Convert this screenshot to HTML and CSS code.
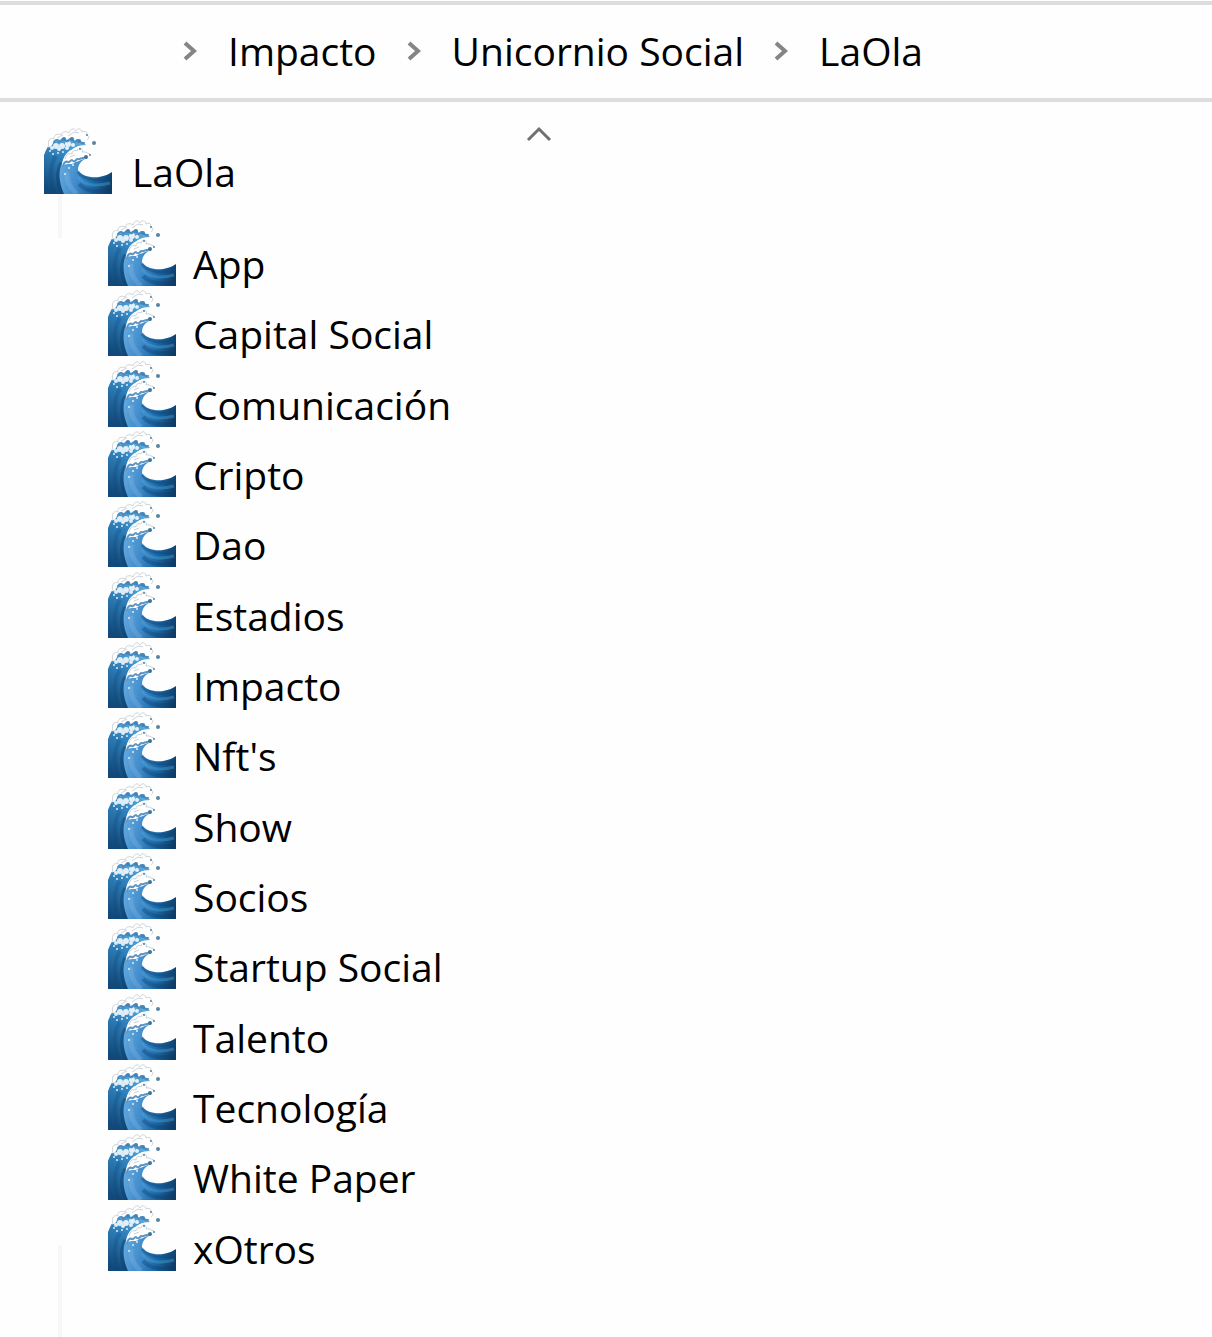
FILE: index.html
```html
<!DOCTYPE html>
<html lang="es">
<head>
  <meta charset="UTF-8" />
  <meta name="viewport" content="width=device-width, initial-scale=1.0"/>
  <title>LaOla</title>
  <link rel="stylesheet" href="styles.css">
</head>
<body>

<!-- Wave icon, reused by every folder -->
<svg class="sprite" aria-hidden="true">
  <defs>
    <linearGradient id="back" x1="0.7" y1="0" x2="0.3" y2="1">
      <stop offset="0" stop-color="#5fb0de"/>
      <stop offset="0.4" stop-color="#2f80bb"/>
      <stop offset="1" stop-color="#12497a"/>
    </linearGradient>
    <linearGradient id="front" x1="0" y1="0.5" x2="1" y2="0.7">
      <stop offset="0" stop-color="#5fa6dc"/>
      <stop offset="0.35" stop-color="#3f8aca"/>
      <stop offset="0.65" stop-color="#1d68a6"/>
      <stop offset="1" stop-color="#0f3c66"/>
    </linearGradient>
    <symbol id="wave" viewBox="0 0 68 68">
      <path fill="url(#back)" d="M0 68V29C2 24 4 19 8 16C14 10 24 10 31 12C36 13 40 16 42 19C34 19 28 22 25 27L23 40L26 68Z"/>
      <path fill="none" stroke="#0b4375" stroke-width="4" opacity=".25" d="M12 30C5 40 6 56 11 68"/>
      <path fill="none" stroke="#0b3d6b" stroke-width="5" opacity=".45" d="M18 37C13 47 14 58 19 68"/>
      <path fill="url(#front)" d="M20 68C15 57 14 45 18 37C22 31 31 30 43 32C38 34 34 38 34 44C37 50 47 52 55 51C61 50 65 48 68 46V68Z"/>
      <path fill="none" stroke="#0c4a7d" stroke-width="3" opacity=".45" d="M34 46C39 53 53 57 68 51"/>
      <path fill="none" stroke="#4aa9dc" stroke-width="3" opacity=".4" d="M34 51C39 59 52 61 66 57"/>
      <path fill="none" stroke="#0c3c68" stroke-width="4" opacity=".35" d="M35 58C41 65 53 67 68 64"/>
      <path fill="none" stroke="#8bbbe5" stroke-width="5" opacity=".3" d="M23 46C22 54 26 62 33 68"/>
      <!-- foam on the crest -->
      <path fill="#fff" d="M4 21C2 15 6 10 11 12C12 6 17 5 21 6C27 1 35 1 39 6C43 5 46 9 43 11C46 14 44 17 41 18C38 17 36 14 33 14C30 16 28 12 25 13C22 15 20 12 17 14C14 16 12 14 9 17C8 20 6 22 4 21Z"/>
      <g fill="#fff" opacity=".85">
        <circle cx="12" cy="20" r="3"/>
        <circle cx="18" cy="20" r="3"/>
        <circle cx="24" cy="18" r="3"/>
        <circle cx="29" cy="19" r="2"/>
        <circle cx="15" cy="23" r="2"/>
        <circle cx="8" cy="22" r="2"/>
        <circle cx="23" cy="22" r="2"/>
      </g>
      <path fill="none" stroke="#cdd3d8" stroke-width="1" stroke-linejoin="round" d="M5 21C3 15 6 11 10 13C9 9 14 7 17 9C18 5 23 5 25 7C26 2 31 2 32 5C34 1 38 3 38 6C42 4 44 7 42 9C46 9 45 13 43 14M13 12L19 9M24 10L30 6L35 7"/>
      <path fill="none" stroke="#4c8cbf" stroke-width="2" stroke-linecap="round" stroke-linejoin="round" d="M10 16C12 13 14 14 15 15C17 16 18 12 20 13C22 14 22 16 24 15C26 12 28 12 29 14C30 17 32 16 33 14C36 14 36 18 40 17"/>
      <g fill="#4484b8">
        <circle cx="20" cy="13" r="2"/>
        <circle cx="28" cy="13" r="2"/>
        <circle cx="35" cy="15" r="2"/>
      </g>
      <!-- foam on the front curl -->
      <path fill="#fff" d="M18 40C18 31 24 24 30 23C35 18 42 20 41 25C46 27 45 31 41 33C37 33 35 36 31 36C28 40 24 36 18 40Z"/>
      <path fill="none" stroke="#c5d2dc" stroke-width="1" d="M21 33C22 28 25 27 28 28C28 24 32 24 33 25C34 20 40 22 38 26C41 25 42 27 46 28M26 31L31 29"/>
      <path fill="none" stroke="#5d95c0" stroke-width="2" stroke-linecap="round" stroke-linejoin="round" d="M19 40C20 36 22 35 24 36C26 37 26 34 28 34C30 37 32 34 33 33C36 34 38 31 42 32"/>
      <circle cx="42" cy="31" r="2" fill="#3c769f"/>
      <g fill="#dceefa">
        <circle cx="9" cy="28" r="1"/>
        <circle cx="14" cy="27" r="1"/>
        <circle cx="6" cy="25" r="1"/>
        <circle cx="19" cy="26" r="1"/>
        <circle cx="25" cy="42" r="1"/>
        <circle cx="29" cy="39" r="1"/>
        <circle cx="21" cy="48" r="1"/>
      </g>
      <g fill="#58839f">
        <circle cx="50" cy="17" r="2"/>
        <circle cx="43" cy="9" r="1"/>
        <circle cx="36" cy="23" r="1"/>
        <circle cx="46" cy="29" r="1"/>
      </g>
    </symbol>
  </defs>
</svg>

<header>
  <nav class="breadcrumb" aria-label="Ruta">
    <svg class="chevron" viewBox="0 0 16 24"><path d="M3 4L12 12L3 20"/></svg>
    <a href="#impacto">Impacto</a>
    <svg class="chevron" viewBox="0 0 16 24"><path d="M3 4L12 12L3 20"/></svg>
    <a href="#unicornio">Unicornio Social</a>
    <svg class="chevron" viewBox="0 0 16 24"><path d="M3 4L12 12L3 20"/></svg>
    <a href="#laola">LaOla</a>
  </nav>
</header>

<main>
  <button class="sort" aria-label="Ordenar">
    <svg viewBox="0 0 28 18"><path d="M3 15L14 4L25 15"/></svg>
  </button>

  <a class="folder root" href="#laola"><svg class="icon"><use href="#wave"/></svg><span>LaOla</span></a>

  <ul class="folders">
    <li><a class="folder" href="#"><svg class="icon"><use href="#wave"/></svg><span>App</span></a></li>
    <li><a class="folder" href="#"><svg class="icon"><use href="#wave"/></svg><span>Capital Social</span></a></li>
    <li><a class="folder" href="#"><svg class="icon"><use href="#wave"/></svg><span>Comunicación</span></a></li>
    <li><a class="folder" href="#"><svg class="icon"><use href="#wave"/></svg><span>Cripto</span></a></li>
    <li><a class="folder" href="#"><svg class="icon"><use href="#wave"/></svg><span>Dao</span></a></li>
    <li><a class="folder" href="#"><svg class="icon"><use href="#wave"/></svg><span>Estadios</span></a></li>
    <li><a class="folder" href="#"><svg class="icon"><use href="#wave"/></svg><span>Impacto</span></a></li>
    <li><a class="folder" href="#"><svg class="icon"><use href="#wave"/></svg><span>Nft's</span></a></li>
    <li><a class="folder" href="#"><svg class="icon"><use href="#wave"/></svg><span>Show</span></a></li>
    <li><a class="folder" href="#"><svg class="icon"><use href="#wave"/></svg><span>Socios</span></a></li>
    <li><a class="folder" href="#"><svg class="icon"><use href="#wave"/></svg><span>Startup Social</span></a></li>
    <li><a class="folder" href="#"><svg class="icon"><use href="#wave"/></svg><span>Talento</span></a></li>
    <li><a class="folder" href="#"><svg class="icon"><use href="#wave"/></svg><span>Tecnología</span></a></li>
    <li><a class="folder" href="#"><svg class="icon"><use href="#wave"/></svg><span>White Paper</span></a></li>
    <li><a class="folder" href="#"><svg class="icon"><use href="#wave"/></svg><span>xOtros</span></a></li>
  </ul>
</main>

</body>
</html>
```
FILE: styles.css
```css
* {
  margin: 0;
  padding: 0;
  box-sizing: border-box;
}

body {
  min-height: 100vh;
  display: flex;
  flex-direction: column;
  font-family: 'Segoe UI', 'Open Sans', 'Noto Sans', sans-serif;
  font-size: 39px;
  line-height: 46px;
  background-color: #fefefe;
  color: #000;
}

a {
  text-decoration: none;
  color: inherit;
}

.sprite {
  position: absolute;
  width: 0;
  height: 0;
}

header {
  margin-top: 1px;
  padding: 23px 0 24px 182px;
  border-top: 4px solid #ddd;
  border-bottom: 4px solid #ddd;
}

.breadcrumb {
  display: flex;
  align-items: center;
  white-space: nowrap;
}

.breadcrumb a {
  margin: 0 29px 0 30px;
}

.chevron {
  width: 16px;
  height: 24px;
  fill: none;
  stroke: #858585;
  stroke-width: 4;
  flex-shrink: 0;
}

main {
  flex: 1;
  position: relative;
  padding: 23px 0 64px 44px;
}

.sort {
  position: absolute;
  top: 23px;
  left: 525px;
  width: 28px;
  height: 18px;
  background: none;
  border: none;
}

.sort svg {
  display: block;
  fill: none;
  stroke: #707070;
  stroke-width: 3;
}

.folder {
  display: flex;
  align-items: flex-end;
  gap: 17px;
  height: 70px;
}

.icon {
  width: 68px;
  height: 68px;
  margin-bottom: 1px;
}

.root {
  gap: 20px;
}

.folder span {
  align-self: flex-end;
}

/* tree guide lines */
.root::before,
main::after {
  content: '';
  position: absolute;
  left: 58px;
  width: 4px;
  background: #f7f7f7;
}

.root::before {
  top: 92px;
  height: 44px;
}

main::after {
  bottom: 0;
  height: 92px;
}

.folders {
  list-style: none;
  padding: 22px 0 0 64px;
}

.folders li:nth-child(3n) {
  padding-top: 1px;
}
```
